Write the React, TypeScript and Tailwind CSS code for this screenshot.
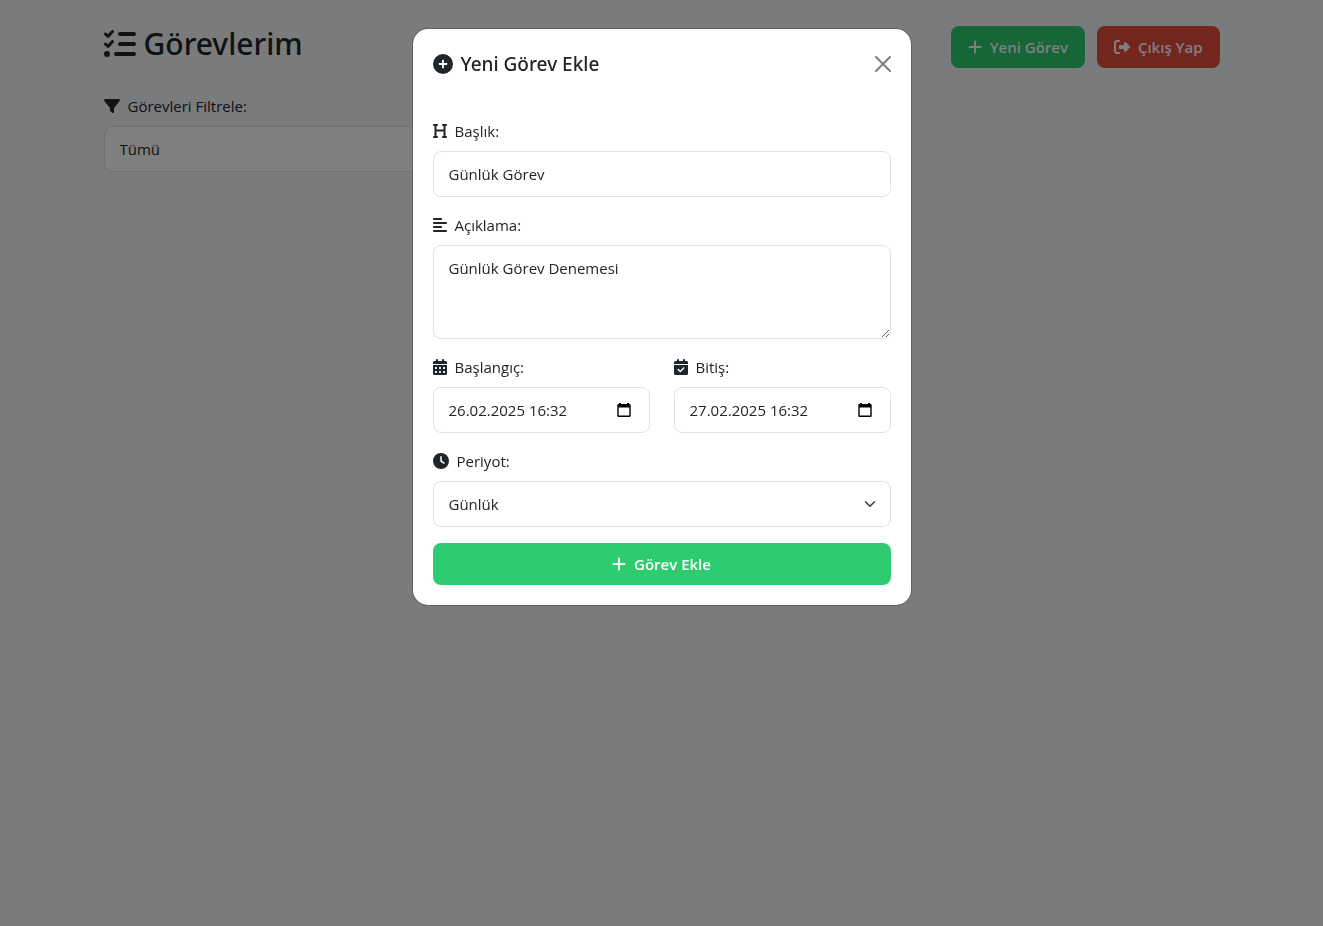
import { useState } from "react";
import type { ReactNode } from "react";
import {
  FaAlignLeft,
  FaCalendarCheck,
  FaCalendarDays,
  FaCirclePlus,
  FaClock,
  FaFilter,
  FaHeading,
  FaListCheck,
  FaPlus,
  FaRightFromBracket,
} from "react-icons/fa6";

const controlClass =
  "block h-[46px] w-full rounded-lg border border-[#dee2e6] bg-white px-[15px] text-[15px] text-[#212529] outline-none";

const buttonClass =
  "flex h-[42px] items-center justify-center gap-2 rounded-lg px-[17px] text-[15px] font-semibold text-white";

function Field({ id, icon, label, children }: { id: string; icon: ReactNode; label: string; children: ReactNode }) {
  return (
    <div className="min-w-0 flex-1">
      <label htmlFor={id} className="mb-2 flex h-6 items-center gap-2 text-[15px]">
        {icon}
        {label}
      </label>
      {children}
    </div>
  );
}

function Select({ id, options }: { id: string; options: string[] }) {
  return (
    <div className="grid items-center">
      <select id={id} className={`${controlClass} col-start-1 row-start-1 appearance-none`}>
        {options.map((option) => (
          <option key={option}>{option}</option>
        ))}
      </select>
      <svg
        viewBox="0 0 16 16"
        className="pointer-events-none col-start-1 row-start-1 mr-[15px] h-3 w-3 justify-self-end"
        fill="none"
        stroke="#343a40"
        strokeWidth="2"
        strokeLinecap="round"
        strokeLinejoin="round"
      >
        <path d="m2 5 6 6 6-6" />
      </svg>
    </div>
  );
}

function DateInput({ id, initial }: { id: string; initial: string }) {
  const [value, setValue] = useState(initial);
  return (
    <div className="flex h-[46px] items-center rounded-lg border border-[#dee2e6] bg-white px-[15px]">
      <input
        id={id}
        type="text"
        value={value}
        onChange={(e) => setValue(e.target.value)}
        className="min-w-0 flex-1 bg-transparent text-[15px] text-[#212529] outline-none"
      />
      <button type="button" aria-label="Tarih seç" className="px-[3px] text-black">
        <svg viewBox="0 0 14 14" className="block h-[14px] w-[14px]" fill="currentColor">
          <path d="M2 0h2v1h6V0h2v1h.5A1.2 1.2 0 0 1 13.700 2.200V12.800A1.200 1.200 0 0 1 12.500 14H1.500A1.200 1.200 0 0 1 .3 12.800V2.200A1.200 1.200 0 0 1 1.500 1H2ZM1.700 4.500v8.100h10.600V4.500Z" fillRule="evenodd" />
        </svg>
      </button>
    </div>
  );
}

function TaskDialog() {
  return (
    <div className="fixed inset-0 flex items-start justify-center overflow-y-auto bg-black/50 p-7">
      <div
        role="dialog"
        aria-modal="true"
        aria-labelledby="dialog-title"
        className="w-full max-w-[500px] rounded-2xl border border-black/20 bg-white bg-clip-padding"
      >
        <div className="flex items-center justify-between p-5">
          <h2
            id="dialog-title"
            className="flex items-center gap-2 font-['Segoe_UI','Noto_Sans',sans-serif] text-[19px] leading-[30px] font-medium"
          >
            <FaCirclePlus className="h-5 w-5" />
            Yeni Görev Ekle
          </h2>
          <button type="button" aria-label="Kapat" className="text-black/50">
            <svg viewBox="0 0 16 16" className="block h-4 w-4" stroke="currentColor" strokeWidth="2" strokeLinecap="round">
              <path d="m1 1 14 14M15 1 1 15" />
            </svg>
          </button>
        </div>
        <form className="flex flex-col gap-4 p-5" onSubmit={(e) => e.preventDefault()}>
          <Field id="title" label="Başlık:" icon={<FaHeading className="h-4 w-[14px]" />}>
            <input id="title" type="text" defaultValue="Günlük Görev" className={controlClass} />
          </Field>
          <Field id="description" label="Açıklama:" icon={<FaAlignLeft className="h-4 w-[14px]" />}>
            <textarea
              id="description"
              defaultValue="Günlük Görev Denemesi"
              className="block h-[94px] w-full resize-y rounded-lg border border-[#dee2e6] bg-white px-[15px] py-[10px] text-[15px] leading-6 text-[#212529] outline-none"
            />
          </Field>
          <div className="flex gap-6">
            <Field id="start" label="Başlangıç:" icon={<FaCalendarDays className="h-4 w-[14px]" />}>
              <DateInput id="start" initial="26.02.2025 16:32" />
            </Field>
            <Field id="end" label="Bitiş:" icon={<FaCalendarCheck className="h-4 w-[14px]" />}>
              <DateInput id="end" initial="27.02.2025 16:32" />
            </Field>
          </div>
          <Field id="period" label="Periyot:" icon={<FaClock className="h-4 w-4" />}>
            <Select id="period" options={["Günlük", "Haftalık", "Aylık"]} />
          </Field>
          <button type="submit" className={`${buttonClass} bg-[#2ecc71]`}>
            <FaPlus className="h-4 w-[14px]" />
            Görev Ekle
          </button>
        </form>
      </div>
    </div>
  );
}

export default function App() {
  return (
    <div className="min-h-screen bg-[#f5f7fa] font-['Segoe_UI','Open_Sans',sans-serif] text-[#212529]">
      <div className="mx-auto max-w-[1140px] px-3 py-5">
        <header className="mb-5 flex h-[54px] items-start justify-between">
          <h1 className="flex items-center gap-2 font-['Segoe_UI','Noto_Sans',sans-serif] text-[30px] leading-[48px] font-medium">
            <FaListCheck className="h-8 w-8" />
            Görevlerim
          </h1>
          <div className="flex gap-3 self-center">
            <button type="button" className={`${buttonClass} bg-[#2ecc71]`}>
              <FaPlus className="h-4 w-[14px]" />
              Yeni Görev
            </button>
            <button type="button" className={`${buttonClass} bg-[#e74c3c]`}>
              <FaRightFromBracket className="h-4 w-4" />
              Çıkış Yap
            </button>
          </div>
        </header>
        <div className="w-1/2">
          <Field id="filter" label="Görevleri Filtrele:" icon={<FaFilter className="h-4 w-4" />}>
            <Select id="filter" options={["Tümü", "Günlük", "Haftalık", "Aylık"]} />
          </Field>
        </div>
      </div>
      <TaskDialog />
    </div>
  );
}
